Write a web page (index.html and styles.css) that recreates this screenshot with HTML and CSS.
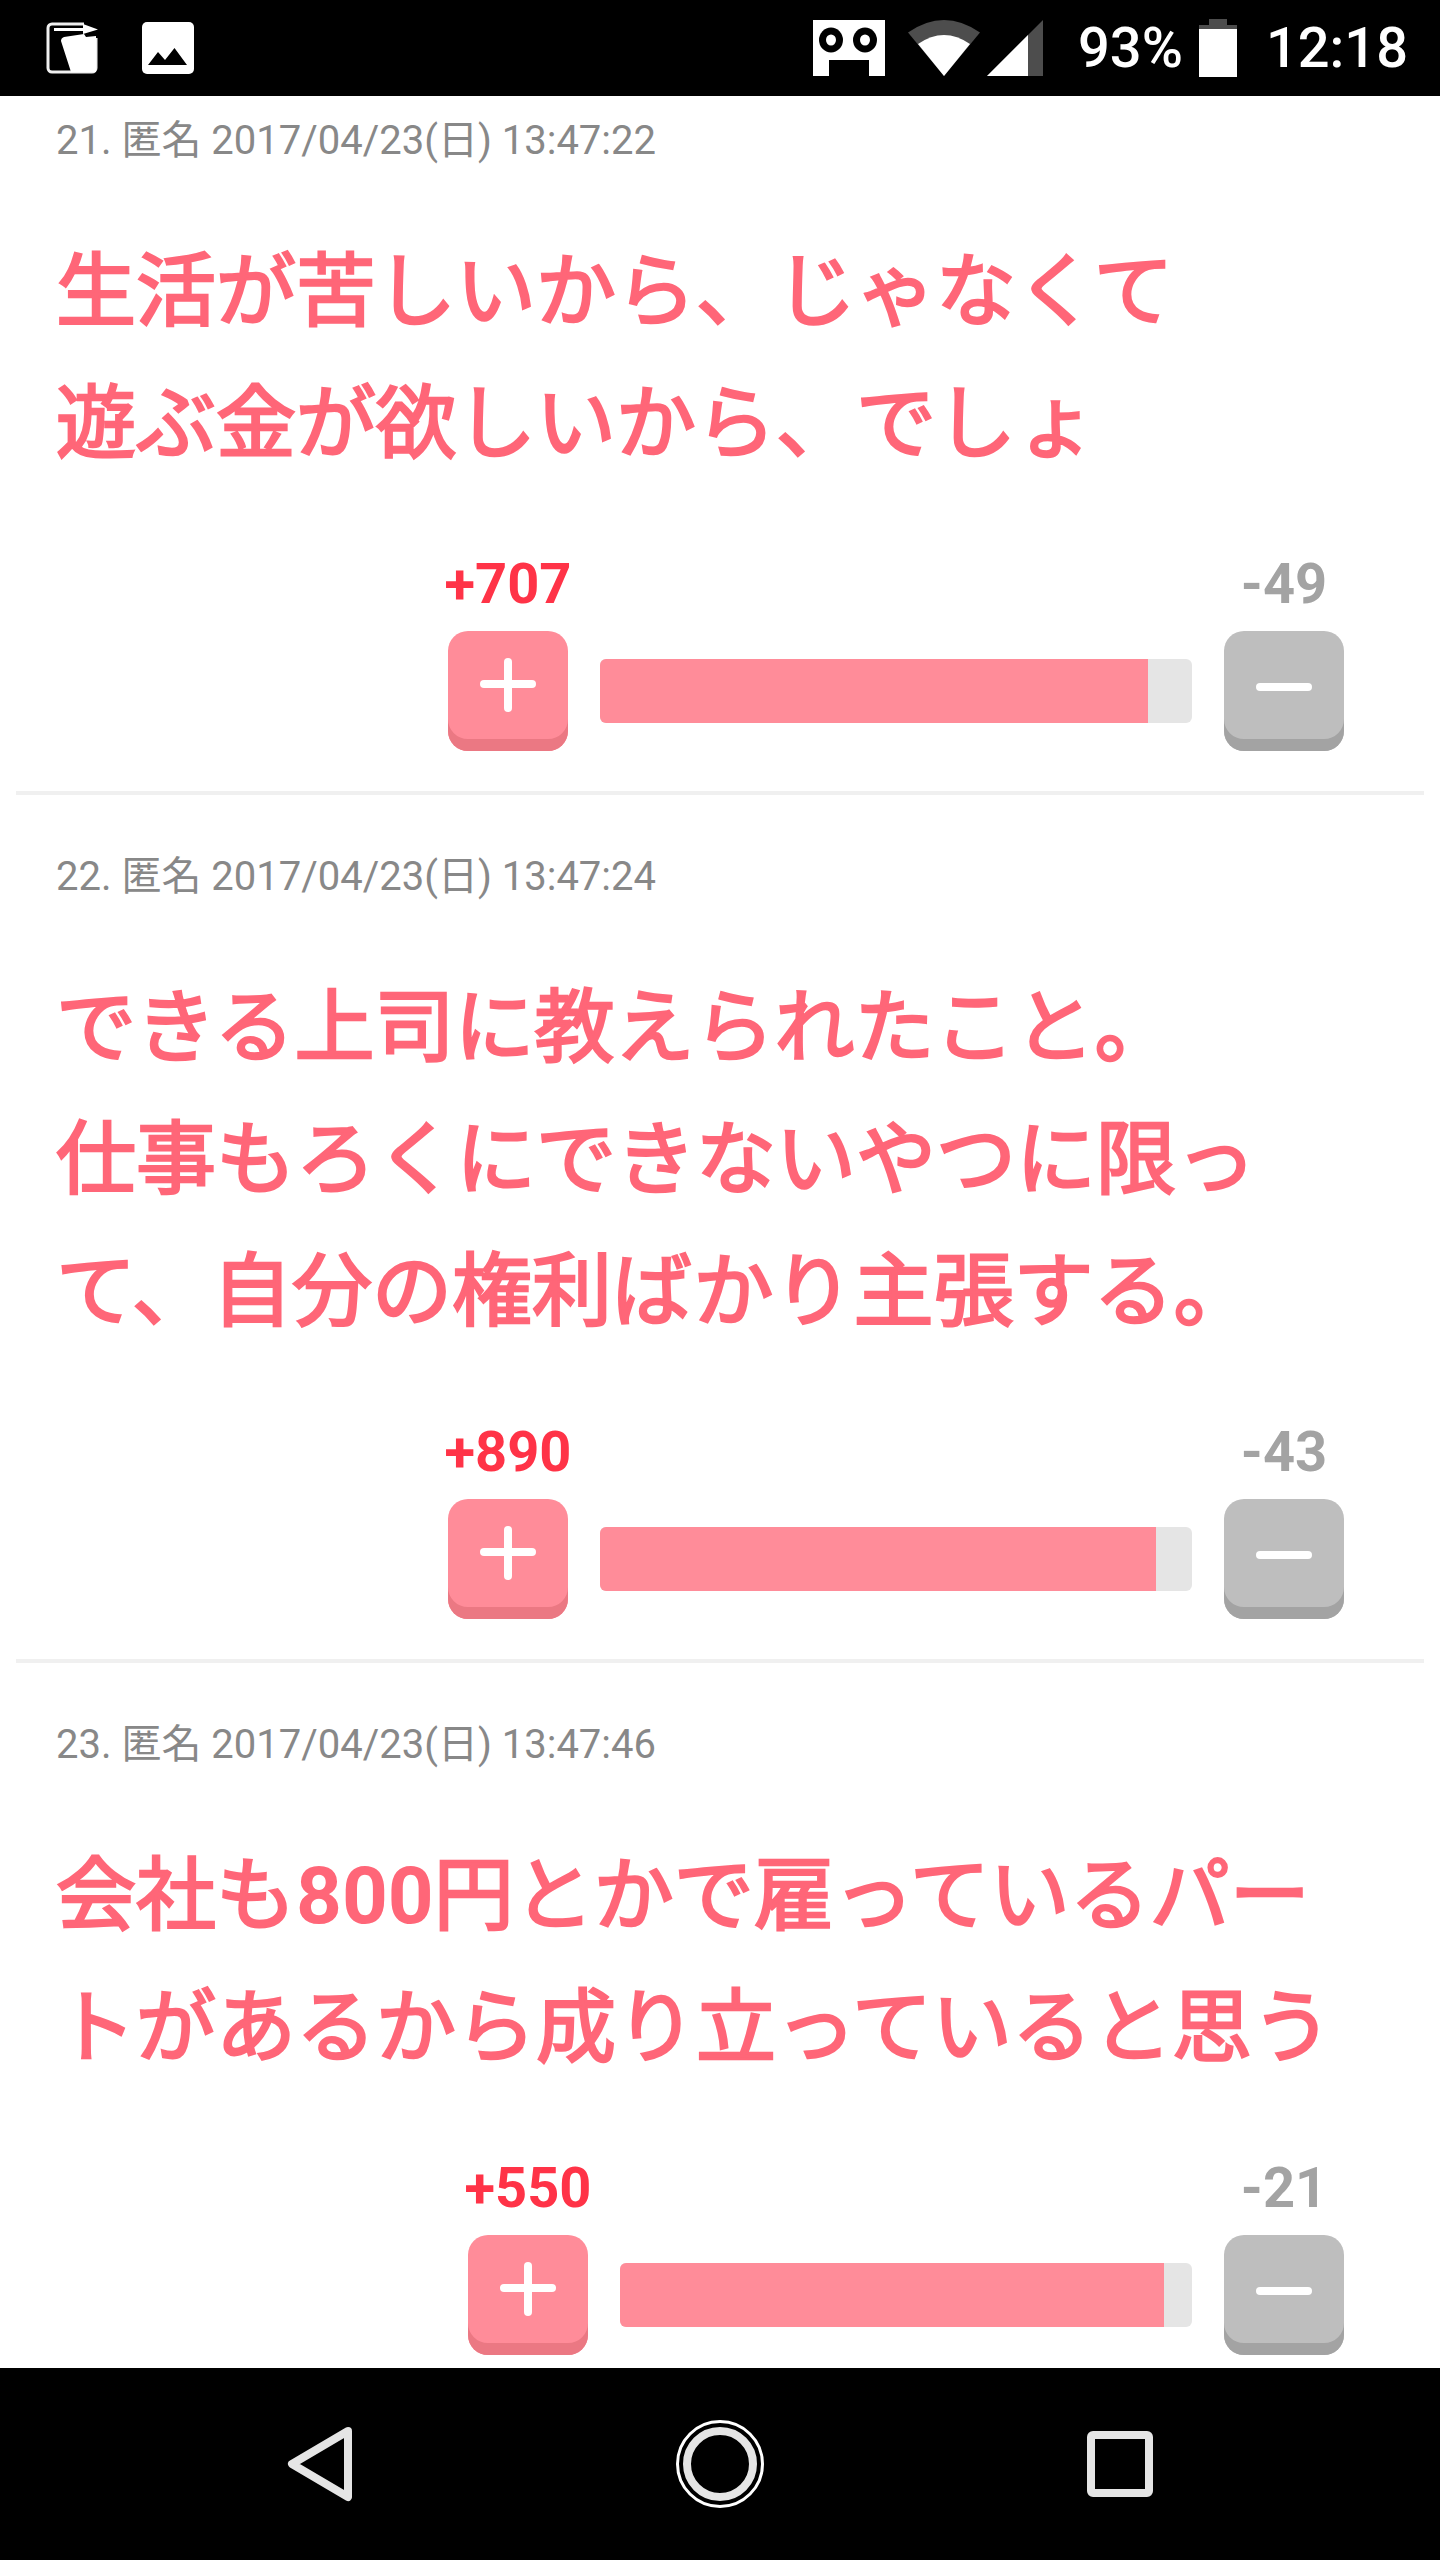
FILE: index.html
```html
<!DOCTYPE html>
<html lang="ja">
<head>
    <meta charset="UTF-8">
    <meta name="viewport" content="width=device-width, initial-scale=1.0">
    <title>コメント</title>
    <link rel="stylesheet" href="styles.css">
</head>
<body>
    <div class="status-bar">
        <div class="status-left">
            <svg class="status-icon" width="52" height="52" viewBox="0 0 52 52">
                <path d="M38 2H6a4 4 0 0 0-4 4v40a4 4 0 0 0 4 4h22M50 16v30a4 4 0 0 1-4 4H28" fill="none" stroke="#f0f0f0" stroke-width="3"/>
                <path d="M8 6H37V2L52 7.500 37 12V9H8z" fill="#fff"/>
                <path d="M15 19Q15 16 18 15L38 12 40 15 50 14V50H25z" fill="#fff"/>
            </svg>
            <svg class="status-icon" width="52" height="52" viewBox="0 0 52 52">
                <rect width="52" height="52" rx="5" fill="#fff"/>
                <path d="M6 43L16 30 23 38 32.500 26 45 43z" fill="#000"/>
            </svg>
        </div>
        <div class="status-right">
            <svg width="72" height="56" viewBox="0 0 72 56" class="rec-icon">
                <path fill="#fff" d="M0 0H72V56H56V40H16V56H0z"/>
                <ellipse cx="18" cy="20" rx="12" ry="12.500" fill="#000"/>
                <ellipse cx="18" cy="20" rx="5" ry="5.500" fill="#fff"/>
                <ellipse cx="52" cy="20" rx="12" ry="12.500" fill="#000"/>
                <ellipse cx="52" cy="20" rx="5" ry="5.500" fill="#fff"/>
            </svg>
            <svg width="72" height="56" viewBox="0 0 72 56" class="wifi-icon">
                <path d="M0 12.500Q36 -12.500 72 12.500L36 56z" fill="#4d4d4d"/>
                <path d="M10 24Q36 6 62 24L36 56z" fill="#fff"/>
            </svg>
            <svg width="56" height="56" viewBox="0 0 56 56" class="signal-icon">
                <path d="M0 56L56 0V56z" fill="#4d4d4d"/>
                <path d="M0 56L41 15V56z" fill="#fff"/>
            </svg>
            <span class="battery-text">93%</span>
            <svg width="38" height="58" viewBox="0 0 38 58" class="battery-icon">
                <path d="M10 0H28V6H38V58H0V6H10z" fill="#4d4d4d"/>
                <rect y="10" width="38" height="48" fill="#fff"/>
            </svg>
            <span class="clock">12:18</span>
        </div>
    </div>

    <div class="comments">
        <div class="comment comment-first">
            <div class="comment-meta">21. 匿名 2017/04/23(日) 13:47:22</div>
            <div class="comment-body">生活が苦しいから、じゃなくて<br>遊ぶ金が欲しいから、でしょ</div>
            <div class="vote">
                <div class="vote-col">
                    <div class="count count-plus">+707</div>
                    <div class="vote-btn btn-plus"><span class="plus-v"></span><span class="plus-h"></span></div>
                </div>
                <div class="bar bar-707"><div class="bar-fill"></div></div>
                <div class="vote-col">
                    <div class="count count-minus">-49</div>
                    <div class="vote-btn btn-minus"><span class="minus-h"></span></div>
                </div>
            </div>
        </div>

        <div class="comment">
            <div class="comment-meta">22. 匿名 2017/04/23(日) 13:47:24</div>
            <div class="comment-body">できる上司に教えられたこと。<br>仕事もろくにできないやつに限っ<br>て、自分の権利ばかり主張する。</div>
            <div class="vote">
                <div class="vote-col">
                    <div class="count count-plus">+890</div>
                    <div class="vote-btn btn-plus"><span class="plus-v"></span><span class="plus-h"></span></div>
                </div>
                <div class="bar bar-890"><div class="bar-fill"></div></div>
                <div class="vote-col">
                    <div class="count count-minus">-43</div>
                    <div class="vote-btn btn-minus"><span class="minus-h"></span></div>
                </div>
            </div>
        </div>

        <div class="comment">
            <div class="comment-meta">23. 匿名 2017/04/23(日) 13:47:46</div>
            <div class="comment-body">会社も<span class="body-num">800</span>円とかで雇っているパー<br>トがあるから成り立っていると思う</div>
            <div class="vote">
                <div class="vote-col">
                    <div class="count count-plus">+550</div>
                    <div class="vote-btn btn-plus"><span class="plus-v"></span><span class="plus-h"></span></div>
                </div>
                <div class="bar bar-550"><div class="bar-fill"></div></div>
                <div class="vote-col">
                    <div class="count count-minus">-21</div>
                    <div class="vote-btn btn-minus"><span class="minus-h"></span></div>
                </div>
            </div>
        </div>
    </div>

    <div class="nav-bar">
        <svg width="72" height="80" viewBox="0 0 72 80">
            <path d="M64 7L8 40 64 73z" fill="none" stroke="#e5e5e5" stroke-width="8" stroke-linejoin="round"/>
        </svg>
        <svg width="88" height="88" viewBox="0 0 88 88">
            <circle cx="44" cy="44" r="42.500" fill="none" stroke="#fff" stroke-width="3"/>
            <circle cx="44" cy="44" r="33" fill="none" stroke="#e5e5e5" stroke-width="8"/>
        </svg>
        <svg width="66" height="66" viewBox="0 0 66 66">
            <rect x="4" y="4" width="58" height="58" rx="2" fill="none" stroke="#e5e5e5" stroke-width="8"/>
        </svg>
    </div>
</body>
</html>
```

FILE: styles.css
```css
body {
    margin: 0;
    width: 1440px;
    height: 2560px;
    overflow: hidden;
    display: flex;
    flex-direction: column;
    background-color: #ffffff;
    font-family: Roboto, "Noto Sans CJK JP", sans-serif;
}

.status-bar {
    height: 96px;
    flex: none;
    background-color: #000000;
    display: flex;
    align-items: center;
    justify-content: space-between;
    color: #ffffff;
}

.status-left {
    display: flex;
    gap: 44px;
    padding-left: 46px;
}

.status-right {
    display: flex;
    align-items: center;
    padding-right: 32px;
}

.wifi-icon {
    margin-left: 23px;
}

.signal-icon {
    margin-left: 7px;
}

.battery-text {
    margin-left: 35px;
    font-size: 56px;
    line-height: 56px;
    font-weight: 500;
}

.battery-icon {
    margin-left: 16px;
}

.clock {
    margin-left: 29px;
    font-size: 56px;
    line-height: 56px;
    font-weight: 500;
}

.comments {
    flex: 1;
    overflow: hidden;
}

.comment {
    margin: 0 16px;
    padding: 57px 40px 40px;
    border-bottom: 4px solid #f0f0f0;
}

.comment-first {
    padding-top: 20px;
}

.comment-meta {
    font-size: 40px;
    line-height: 50px;
    color: #888888;
}

.comment-body {
    margin-top: 60px;
    font-size: 80px;
    line-height: 132px;
    font-weight: 400;
    -webkit-text-stroke: 2.500px #ff6678;
    color: #ff6678;
    white-space: nowrap;
}

.body-num {
    font-weight: 700;
    -webkit-text-stroke: 0;
}

.vote {
    margin-top: 62px;
    display: flex;
    justify-content: flex-end;
    align-items: flex-end;
    gap: 32px;
    padding-right: 40px;
}

.vote-col {
    width: 120px;
    display: flex;
    flex-direction: column;
    align-items: center;
}

.count {
    font-size: 56px;
    line-height: 64px;
    font-weight: 700;
    white-space: nowrap;
    margin-bottom: 15px;
}

.count-plus {
    color: #ff3347;
}

.count-minus {
    color: #a3a3a3;
}

.vote-btn {
    width: 120px;
    height: 120px;
    border-radius: 20px;
    box-sizing: border-box;
    position: relative;
}

.btn-plus {
    background-color: #ff8c99;
    box-shadow: inset 0 -12px 0 #eb7883;
}

.btn-minus {
    background-color: #bebebe;
    box-shadow: inset 0 -12px 0 #a3a3a3;
}

.plus-v {
    position: absolute;
    left: 56px;
    top: 27px;
    width: 8px;
    height: 54px;
    border-radius: 4px;
    background-color: #ffffff;
}

.plus-h,
.minus-h {
    position: absolute;
    left: 32px;
    top: 49px;
    width: 56px;
    height: 8px;
    border-radius: 4px;
    background-color: #ffffff;
}

.minus-h {
    top: 52px;
}

.bar {
    align-self: flex-end;
    height: 64px;
    margin-bottom: 28px;
    border-radius: 6px;
    background-color: #e5e5e5;
    overflow: hidden;
}

.bar-fill {
    height: 100%;
    background-color: #ff8c99;
}

.bar-707 {
    width: 592px;
}

.bar-707 .bar-fill {
    width: 548px;
}

.bar-890 {
    width: 592px;
}

.bar-890 .bar-fill {
    width: 556px;
}

.bar-550 {
    width: 572px;
}

.bar-550 .bar-fill {
    width: 544px;
}

.nav-bar {
    height: 192px;
    flex: none;
    background-color: #000000;
    display: grid;
    grid-template-columns: repeat(3, 400px);
    justify-content: center;
    align-items: center;
    justify-items: center;
}
```
